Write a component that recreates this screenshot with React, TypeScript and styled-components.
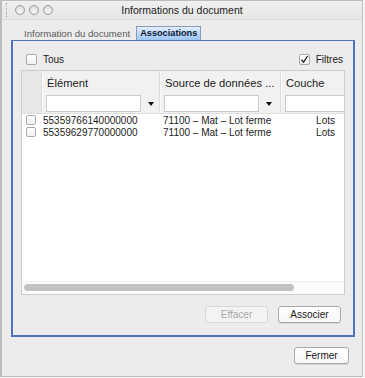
import React from 'react';
import styled, { createGlobalStyle } from 'styled-components';

const Global = createGlobalStyle`
  html, body { margin: 0; padding: 0; background: #f7f7f7; }
  body { font-family: "Liberation Sans", Arial, sans-serif; color: #1e1e1e; }
  * { box-sizing: border-box; }
`;

const Win = styled.div`
  width: 363px;
  height: 377px;
  border: 1px solid #bdbdbd;
  border-left-width: 2px;
  background: #ececec;
  display: flex;
  flex-direction: column;
`;

const TitleBar = styled.div`
  height: 19px;
  display: flex;
  align-items: center;
  background: linear-gradient(#efefef, #e7e7e7);
  border-bottom: 1px solid #dcdcdc;
`;

const Side = styled.div`
  width: 54px;
  display: flex;
  align-items: center;
  gap: 4px;
  padding-left: 4px;
`;

const Grip = styled.div`
  width: 1px;
  height: 14px;
  border-left: 1px dotted #a0a0a0;
  margin-right: 4px;
`;

const Light = styled.div`
  width: 10px;
  height: 10px;
  border-radius: 50%;
  border: 1px solid #9c9c9c;
  background: radial-gradient(circle at 50% 70%, #fafafa 0%, #e2e2e2 60%, #cbcbcb 100%);
`;

const Title = styled.div`
  flex: 1;
  text-align: center;
  font-size: 10.5px;
  color: #222;
`;

const Body = styled.div`
  flex: 1;
  display: flex;
  flex-direction: column;
  padding: 6px 7px 0 9px;
`;

const Tabs = styled.div`
  display: flex;
  align-items: flex-end;
  height: 14px;
  padding-left: 9px;
`;

const Tab = styled.div<{ $active?: boolean }>`
  height: 14px;
  padding: 0 3px;
  margin-right: ${p => (p.$active ? '0' : '2px')};
  font-size: ${p => (p.$active ? '9.2px' : '9.6px')};
  font-weight: ${p => (p.$active ? 'bold' : 'normal')};
  color: ${p => (p.$active ? '#0d1a33' : '#5a5a5a')};
  line-height: 13px;
  border: 1px solid ${p => (p.$active ? '#8a9bb8' : 'transparent')};
  border-bottom: none;
  background: ${p => (p.$active ? 'linear-gradient(#e4effd, #bcd6f8 50%, #9cc6f4)' : 'transparent')};
`;

const Panel = styled.div`
  height: 297px;
  border: 2px solid #4f72c0;
  border-top-width: 1px;
  display: flex;
  flex-direction: column;
  padding: 11px 7px 11px 8px;
`;

const TopRow = styled.div`
  height: 14px;
  display: flex;
  align-items: center;
  justify-content: space-between;
  padding: 0 3px 0 5px;
  margin-bottom: 4px;
`;

const CheckLabel = styled.label`
  display: flex;
  align-items: center;
  gap: 6px;
  font-size: 10px;
  color: #222;
`;

const Box = styled.span<{ $small?: boolean }>`
  width: ${p => (p.$small ? '10px' : '11px')};
  height: ${p => (p.$small ? '10px' : '11px')};
  border: 1px solid #a9a9a9;
  border-radius: 2px;
  background: linear-gradient(#ffffff, #f1f1f1);
  display: inline-flex;
  align-items: center;
  justify-content: center;
  flex: none;
`;

const Table = styled.div`
  width: 324px;
  height: 225px;
  border: 1px solid #cdcdcd;
  background: #fff;
  display: flex;
  flex-direction: column;
  overflow: hidden;
`;

const cols = '21px 118px 121px 90px';

const Header = styled.div`
  display: grid;
  grid-template-columns: ${cols};
  height: 43px;
  background: #f1f1f1;
  border-bottom: 1px solid #e0e0e0;
`;

const HeadCell = styled.div<{ $corner?: boolean }>`
  display: flex;
  flex-direction: column;
  padding: 6px 0 0 3px;
  background: ${p => (p.$corner ? '#e7e7e7' : '#f1f1f1')};
  border-right: 1px solid #fbfbfb;
  box-shadow: inset -1px 0 0 #dcdcdc;
`;

const HeadTitle = styled.div`
  height: 15px;
  font-size: 11.2px;
  color: #1c1c1c;
  white-space: nowrap;
  padding-left: 1px;
`;

const Combo = styled.div`
  margin-top: 3px;
  display: flex;
  align-items: center;
  height: 17px;
`;

const ComboField = styled.div<{ $w: number }>`
  width: ${p => p.$w}px;
  height: 17px;
  background: #fff;
  border: 1px solid #cbcbcb;
  flex: none;
`;

const Arrow = styled.div`
  width: 0;
  height: 0;
  margin-left: 7px;
  border-left: 3px solid transparent;
  border-right: 3px solid transparent;
  border-top: 4px solid #111;
`;

const Rows = styled.div`
  flex: 1;
  padding-top: 0;
`;

const Row = styled.div`
  display: grid;
  grid-template-columns: ${cols};
  height: 12px;
  align-items: center;
  font-size: 10px;
  color: #1c1c1c;
`;

const Cell = styled.div<{ $right?: boolean; $pad?: number }>`
  white-space: nowrap;
  padding-left: ${p => p.$pad ?? 0}px;
  text-align: ${p => (p.$right ? 'right' : 'left')};
  padding-right: ${p => (p.$right ? '37px' : '0')};
`;

const CheckCell = styled.div`
  display: flex;
  align-items: center;
  padding-left: 4px;
`;

const ScrollBar = styled.div`
  height: 13px;
  border-top: 1px solid #ececec;
  background: #fbfbfb;
  padding: 2px 0 0 2px;
`;

const Thumb = styled.div`
  width: 270px;
  height: 7px;
  border-radius: 4px;
  background: #c2c2c2;
`;

const ButtonRow = styled.div`
  display: flex;
  justify-content: flex-end;
  gap: 10px;
  margin-top: 11px;
  padding-right: 5px;
`;

const Button = styled.button<{ $w: number; $disabled?: boolean }>`
  width: ${p => p.$w}px;
  height: 17px;
  padding: 0;
  font-family: "Liberation Sans", Arial, sans-serif;
  font-size: 10px;
  color: ${p => (p.$disabled ? '#a8a8a8' : '#1a1a1a')};
  background: ${p => (p.$disabled ? '#f3f3f3' : 'linear-gradient(#ffffff, #f7f7f7)')};
  border: 1px solid ${p => (p.$disabled ? '#d8d8d8' : '#a9a9a9')};
  border-radius: 3px;
  box-shadow: ${p => (p.$disabled ? 'none' : '0 1px 0 #d6d6d6')};
`;

const Footer = styled.div`
  display: flex;
  justify-content: flex-end;
  margin-top: 10px;
  padding-right: 6px;
`;

const Check = () => (
  <svg width="9" height="9" viewBox="0 0 9 9">
    <path d="M1.5 4.8 L3.6 7.2 L7.6 1" fill="none" stroke="#222" strokeWidth="1.3" />
  </svg>
);

const rows = [
  { id: '55359766140000000', src: '71100 – Mat – Lot ferme', layer: 'Lots' },
  { id: '55359629770000000', src: '71100 – Mat – Lot ferme', layer: 'Lots' },
];

export default function App() {
  return (
    <>
      <Global />
      <Win>
        <TitleBar>
          <Side>
            <Grip />
            <Light />
            <Light />
            <Light />
          </Side>
          <Title>Informations du document</Title>
          <Side />
        </TitleBar>
        <Body>
          <Tabs>
            <Tab>Information du document</Tab>
            <Tab $active>Associations</Tab>
          </Tabs>
          <Panel>
            <TopRow>
              <CheckLabel>
                <Box />
                Tous
              </CheckLabel>
              <CheckLabel>
                <Box>
                  <Check />
                </Box>
                Filtres
              </CheckLabel>
            </TopRow>
            <Table>
              <Header>
                <HeadCell $corner />
                <HeadCell>
                  <HeadTitle>Élément</HeadTitle>
                  <Combo>
                    <ComboField $w={95} />
                    <Arrow />
                  </Combo>
                </HeadCell>
                <HeadCell>
                  <HeadTitle>Source de données ...</HeadTitle>
                  <Combo>
                    <ComboField $w={95} />
                    <Arrow />
                  </Combo>
                </HeadCell>
                <HeadCell>
                  <HeadTitle>Couche</HeadTitle>
                  <Combo>
                    <ComboField $w={95} />
                  </Combo>
                </HeadCell>
              </Header>
              <Rows>
                {rows.map(r => (
                  <Row key={r.id}>
                    <CheckCell>
                      <Box $small />
                    </CheckCell>
                    <Cell>{r.id}</Cell>
                    <Cell $pad={2}>{r.src}</Cell>
                    <Cell $right>{r.layer}</Cell>
                  </Row>
                ))}
              </Rows>
              <ScrollBar>
                <Thumb />
              </ScrollBar>
            </Table>
            <ButtonRow>
              <Button $w={63} $disabled>Effacer</Button>
              <Button $w={63}>Associer</Button>
            </ButtonRow>
          </Panel>
          <Footer>
            <Button $w={55}>Fermer</Button>
          </Footer>
        </Body>
      </Win>
    </>
  );
}
